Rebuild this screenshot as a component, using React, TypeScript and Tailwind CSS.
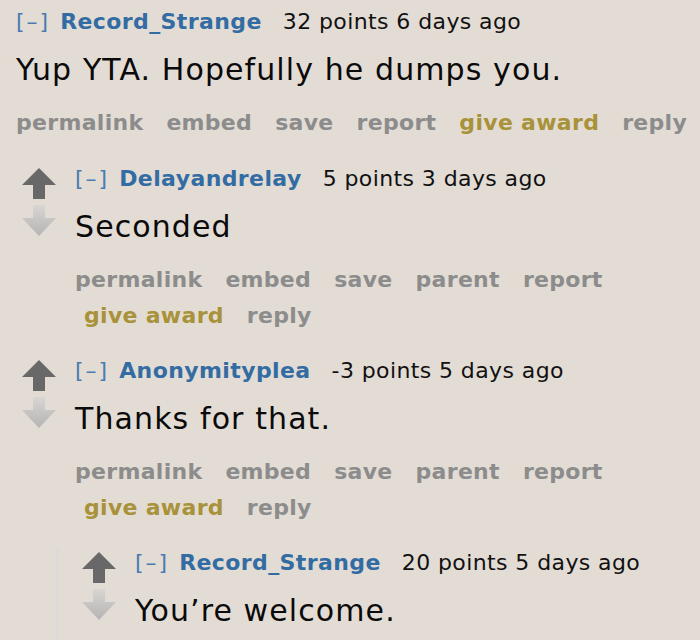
import type { ReactNode } from 'react';

type Comment = {
  author: string;
  points: string;
  age: string;
  body: string;
  links: string[];
  children?: Comment[];
};

const thread: Comment = {
  author: 'Record_Strange',
  points: '32 points',
  age: '6 days ago',
  body: 'Yup YTA. Hopefully he dumps you.',
  links: ['permalink', 'embed', 'save', 'report', 'give award', 'reply'],
  children: [
    {
      author: 'Delayandrelay',
      points: '5 points',
      age: '3 days ago',
      body: 'Seconded',
      links: ['permalink', 'embed', 'save', 'parent', 'report', 'give award', 'reply'],
    },
    {
      author: 'Anonymityplea',
      points: '-3 points',
      age: '5 days ago',
      body: 'Thanks for that.',
      links: ['permalink', 'embed', 'save', 'parent', 'report', 'give award', 'reply'],
      children: [
        {
          author: 'Record_Strange',
          points: '20 points',
          age: '5 days ago',
          body: 'You\u2019re welcome.',
          links: ['permalink', 'embed', 'save', 'parent', 'report', 'give award', 'reply'],
        },
      ],
    },
  ],
};

const UpArrow = () => (
  <svg width="34" height="31" viewBox="0 0 34 31" className="block">
    <polygon points="17,0 34,17 23,17 23,31 11,31 11,17 0,17" fill="#686868" />
  </svg>
);

const DownArrow = () => (
  <svg width="34" height="31" viewBox="0 0 34 31" className="block">
    <defs>
      <linearGradient id="down" x1="0" y1="0" x2="0" y2="1">
        <stop offset="0" stopColor="#d8d5d2" />
        <stop offset="1" stopColor="#b4b4b4" />
      </linearGradient>
    </defs>
    <polygon points="11,0 23,0 23,13 34,13 17,31 0,13 11,13" fill="url(#down)" />
  </svg>
);

const Tagline = ({ c }: { c: Comment }) => (
  <div className="h-[30px] whitespace-nowrap text-[22px] leading-[30px] tracking-[0.4px]">
    <span className="tracking-[2px] text-[#4a7bb3]">[–]</span>
    <span className="ml-[10px] font-bold text-[#336ca3]">{c.author}</span>
    <span className="ml-[21px] text-[#111]">
      {c.points} {c.age}
    </span>
  </div>
);

const Links = ({ links, nowrap = false }: { links: string[]; nowrap?: boolean }) => (
  <div
    className={`mt-[15px] flex ${
      nowrap ? 'flex-nowrap whitespace-nowrap' : 'flex-wrap'
    } text-[22px] font-bold leading-[36px] tracking-[0.3px]`}
  >
    {links.map((l, i) => (
      <span
        key={l}
        className={`${i === 0 ? '' : 'pl-[9px]'} pr-[14px] ${
          l === 'give award' ? 'text-[#a8923a]' : 'text-[#8c8c8c]'
        }`}
      >
        {l}
      </span>
    ))}
  </div>
);

const Body = ({ children }: { children: ReactNode }) => (
  <div className="mt-[13px] whitespace-nowrap text-[30px] leading-[40px] tracking-[1.1px] text-[#0a0a0a]">
    {children}
  </div>
);

const Entry = ({ c }: { c: Comment }) => (
  <div className="mt-[22px]">
    <div className="flex">
      <div className="flex w-[34px] shrink-0 flex-col gap-[6px] pt-[4px]">
        <UpArrow />
        <DownArrow />
      </div>
      <div className="ml-[19px] min-w-0 flex-1">
        <Tagline c={c} />
        <Body>{c.body}</Body>
        <Links links={c.links} />
      </div>
    </div>
    {c.children && (
      <div className="ml-[35px] border-l border-dotted border-[#cfd0ef] pl-[24px]">
        {c.children.map((ch, i) => (
          <Entry key={i} c={ch} />
        ))}
      </div>
    )}
  </div>
);

export default function App() {
  return (
    <div
      className="h-[640px] w-[700px] overflow-hidden bg-[#e3dcd5] pl-[16px] pt-[7px]"
      style={{ fontFamily: '"DejaVu Sans", Verdana, sans-serif' }}
    >
      <Tagline c={thread} />
      <Body>{thread.body}</Body>
      <Links links={thread.links} nowrap />
      <div className="ml-[6px] pt-[1px]">
        {thread.children!.map((ch, i) => (
          <Entry key={i} c={ch} />
        ))}
      </div>
    </div>
  );
}
